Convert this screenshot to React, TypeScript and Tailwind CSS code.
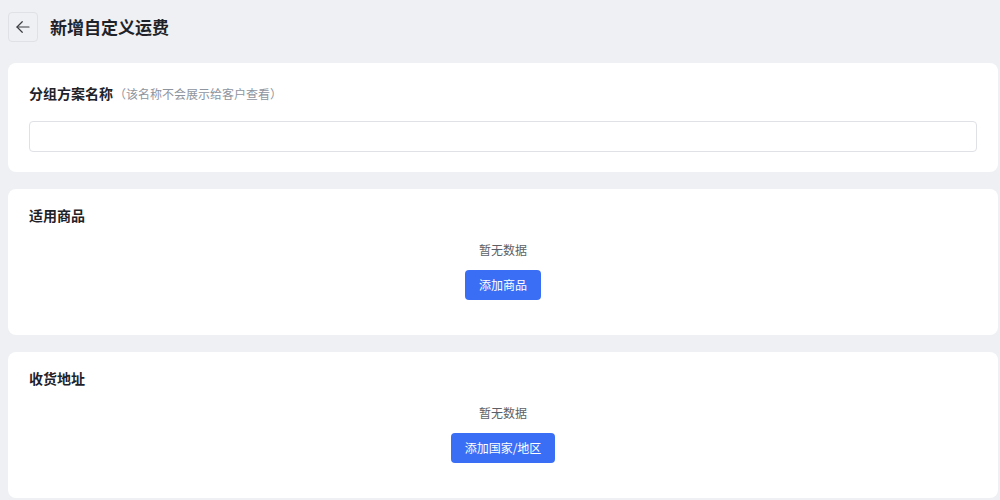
import React from "react";

const font = { fontFamily: '"Noto Sans CJK SC", "Noto Sans", sans-serif' };

function Empty({ label }: { label: string }) {
  return (
    <div className="flex flex-col items-center">
      <div className="text-[12px] leading-[18px] text-[#5c5f66]">暂无数据</div>
      <button className="mt-[11px] h-[30px] px-[14px] rounded-[4px] bg-[#3a6ff5] text-white text-[12px] leading-[30px]">
        {label}
      </button>
    </div>
  );
}

export default function App() {
  return (
    <div className="w-[1000px] h-[500px] bg-[#eef0f3] overflow-hidden" style={font}>
      <div className="flex items-center h-[52px] pl-2 pt-[1px]">
        <button className="w-[30px] h-[30px] border border-[#dfe1e6] rounded-[4px] flex items-center justify-center text-[#3a3d42]">
          <svg width="18" height="18" viewBox="0 0 24 24" fill="none" stroke="currentColor" strokeWidth="1.6" strokeLinecap="round" strokeLinejoin="round">
            <path d="M20 12H4" />
            <path d="M11 19l-7-7 7-7" />
          </svg>
        </button>
        <div className="ml-3 text-[17px] font-bold text-[#1f2329]">新增自定义运费</div>
      </div>
      <div className="flex flex-col gap-[17px] ml-2 mr-[2px] mt-[11px]">
        <div className="bg-white rounded-[8px] h-[109px] px-[21px] pt-[20px]">
          <div className="flex items-baseline">
            <span className="text-[14px] font-bold text-[#1f2329]">分组方案名称</span>
            <span className="ml-[1px] text-[12px] text-[#8f959e]">（该名称不会展示给客户查看）</span>
          </div>
          <div className="mt-[17px] h-[31px] border border-[#dfe1e6] rounded-[4px]" />
        </div>
        <div className="bg-white rounded-[8px] h-[146px] px-[21px] pt-[16px]">
          <div className="text-[14px] font-bold text-[#1f2329] leading-[20px]">适用商品</div>
          <div className="mt-[16px]">
            <Empty label="添加商品" />
          </div>
        </div>
        <div className="bg-white rounded-[8px] h-[146px] px-[21px] pt-[16px]">
          <div className="text-[14px] font-bold text-[#1f2329] leading-[20px]">收货地址</div>
          <div className="mt-[16px]">
            <Empty label="添加国家/地区" />
          </div>
        </div>
      </div>
    </div>
  );
}
